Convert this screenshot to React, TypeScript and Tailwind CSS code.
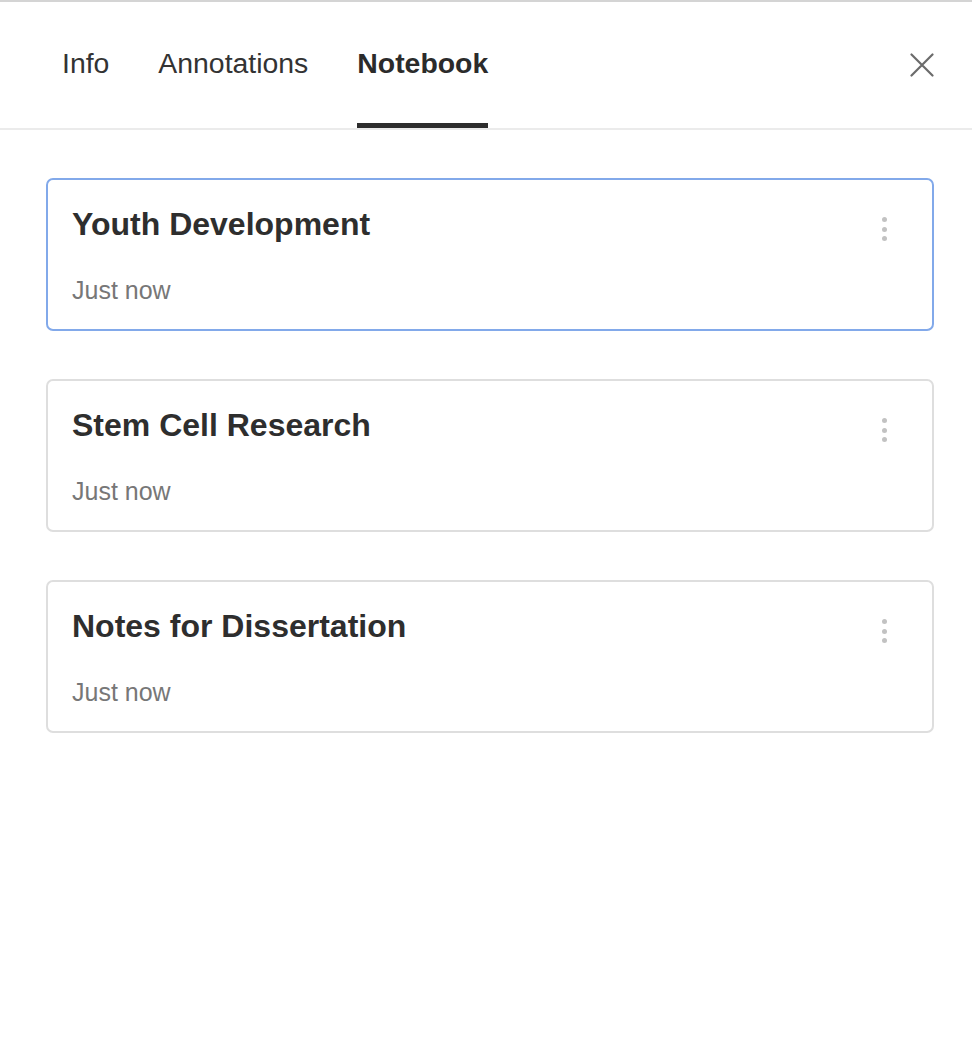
import React, { useState } from 'react';

interface Notebook {
  id: string;
  title: string;
  updated: string;
}

const notebooks: Notebook[] = [
  { id: 'nb-1', title: 'Youth Development', updated: 'Just now' },
  { id: 'nb-2', title: 'Stem Cell Research', updated: 'Just now' },
  { id: 'nb-3', title: 'Notes for Dissertation', updated: 'Just now' },
];

const tabs = ['Info', 'Annotations', 'Notebook'];

const CloseIcon = () => (
  <svg width="24" height="24" viewBox="0 0 24 24" fill="none" stroke="#6b6b6b" strokeWidth="2.2" strokeLinecap="round">
    <path d="M1.5 1.5L22.5 22.5M22.5 1.5L1.5 22.5" />
  </svg>
);

const MoreDots = () => (
  <div className="flex flex-col gap-[4.5px]">
    <span className="block w-[5px] h-[5px] rounded-full bg-[#c2c2c2]" />
    <span className="block w-[5px] h-[5px] rounded-full bg-[#c2c2c2]" />
    <span className="block w-[5px] h-[5px] rounded-full bg-[#c2c2c2]" />
  </div>
);

const App = () => {
  const [activeTab, setActiveTab] = useState('Notebook');
  const [selected, setSelected] = useState('nb-1');

  return (
    <div
      className="min-h-screen bg-white border-t-2 border-[#d4d4d4] text-[#2e2e2e]"
      style={{ fontFamily: '"Liberation Sans", Arial, sans-serif' }}
    >
      {/* header with tabs */}
      <div className="flex h-[128px] border-b-2 border-[#ebebeb] pl-[62px] pr-[38px]">
        <div className="flex gap-[49px] h-full">
          {tabs.map((tab) => (
            <button
              key={tab}
              onClick={() => setActiveTab(tab)}
              className={`flex items-center h-full pt-[2px] border-b-[5px] text-[28.4px] leading-none ${
                activeTab === tab ? 'border-[#2d2d2d] font-bold text-[#2b2b2b]' : 'border-transparent text-[#333333]'
              }`}
            >
              {tab}
            </button>
          ))}
        </div>
        <div className="flex-1" />
        <button className="flex items-center pb-[1px]">
          <CloseIcon />
        </button>
      </div>

      {/* notebook list */}
      <div className="flex flex-col gap-[48px] pt-[48px] pl-[46px] pr-[38px]">
        {notebooks.map((nb) => (
          <div
            key={nb.id}
            onClick={() => setSelected(nb.id)}
            className={`h-[153px] rounded-[7px] border-2 pl-[24px] pr-[45px] pt-[24px] pb-[24px] flex flex-col ${
              selected === nb.id ? 'border-[#82a9ea]' : 'border-[#dedede]'
            }`}
          >
            <div className="flex items-start justify-between">
              <p className="text-[32px] leading-[40px] font-bold text-[#2e2e2e]">{nb.title}</p>
              <div className="mt-[13px]">
                <MoreDots />
              </div>
            </div>
            <p className="mt-[31px] text-[25px] leading-[30px] text-[#777777]">{nb.updated}</p>
          </div>
        ))}
      </div>
    </div>
  );
};

export default App;
